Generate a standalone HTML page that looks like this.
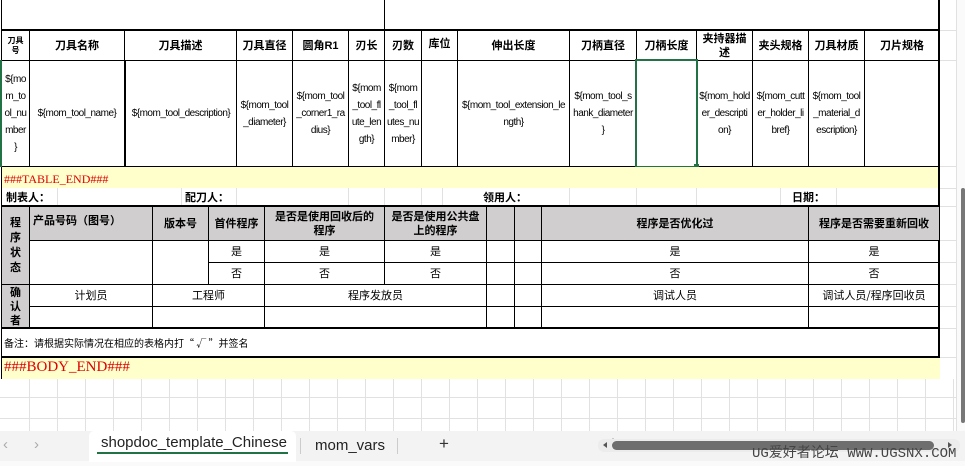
<!DOCTYPE html>
<html><head><meta charset="utf-8">
<style>
*{margin:0;padding:0;box-sizing:border-box}
body{width:965px;height:466px;overflow:hidden;background:#fff;position:relative;font-family:"Liberation Sans","Noto Sans CJK SC",sans-serif;}
.a{position:absolute}
.c{position:absolute;border:1px solid #000;display:flex;align-items:center;justify-content:center;text-align:center;font-size:10px;color:#000;line-height:17px;overflow:hidden;white-space:nowrap;padding:0}
.d{font-size:10px;letter-spacing:-0.5px}
.h{font-weight:bold;font-size:11px;line-height:14px}
.g{background:#d0cece}
.n{font-family:"Noto Sans CJK SC",sans-serif;font-size:11px}
.vl{position:absolute;width:1px;background:#e1e1e1}
.hl{position:absolute;height:1px;background:#e1e1e1}
.k{position:absolute;background:#000}
</style></head><body>
<div class="a" style="left:0;top:379px;width:956px;height:52px;background:
repeating-linear-gradient(90deg,transparent 0 27px,#e1e1e1 27px 28px);background-position:2px 0"></div>
<div class="hl" style="left:0;top:397px;width:956px"></div>
<div class="hl" style="left:0;top:418px;width:956px"></div>
<div class="vl" style="left:956px;top:0;height:431px"></div>
<div class="hl" style="left:940px;top:30px;width:17px"></div>
<div class="hl" style="left:940px;top:60px;width:17px"></div>
<div class="hl" style="left:940px;top:166px;width:17px"></div>
<div class="hl" style="left:940px;top:188px;width:17px"></div>
<div class="hl" style="left:940px;top:206px;width:17px"></div>
<div class="hl" style="left:940px;top:240px;width:17px"></div>
<div class="hl" style="left:940px;top:262px;width:17px"></div>
<div class="hl" style="left:940px;top:284px;width:17px"></div>
<div class="hl" style="left:940px;top:306px;width:17px"></div>
<div class="hl" style="left:940px;top:328px;width:17px"></div>
<div class="hl" style="left:940px;top:357px;width:17px"></div>

<div class="k" style="left:1px;top:0;width:1px;height:379px"></div>
<div class="k" style="left:384px;top:0;width:1px;height:30px"></div>
<div class="k" style="left:938px;top:0;width:2px;height:359px"></div>
<div class="k" style="left:1px;top:29px;width:939px;height:2px"></div>

<div class="c h" style="left:1px;top:30px;width:29px;height:31px;font-size:8px;line-height:10px">刀具<br>号</div>
<div class="c h" style="left:29px;top:30px;width:96px;height:31px">刀具名称</div>
<div class="c h" style="left:124px;top:30px;width:113px;height:31px">刀具描述</div>
<div class="c h" style="left:236px;top:30px;width:57px;height:31px">刀具直径</div>
<div class="c h" style="left:292px;top:30px;width:57px;height:31px">圆角R1</div>
<div class="c h" style="left:348px;top:30px;width:37px;height:31px">刃长</div>
<div class="c h" style="left:384px;top:30px;width:38px;height:31px">刃数</div>
<div class="c h" style="left:421px;top:30px;width:37px;height:31px;align-items:flex-start;padding-top:6px">库位</div>
<div class="c h" style="left:457px;top:30px;width:113px;height:31px">伸出长度</div>
<div class="c h" style="left:569px;top:30px;width:68px;height:31px">刀柄直径</div>
<div class="c h" style="left:636px;top:30px;width:61px;height:31px">刀柄长度</div>
<div class="c h" style="left:696px;top:30px;width:57px;height:31px">夹持器描<br>述</div>
<div class="c h" style="left:752px;top:30px;width:57px;height:31px">夹头规格</div>
<div class="c h" style="left:808px;top:30px;width:57px;height:31px">刀具材质</div>
<div class="c h" style="left:864px;top:30px;width:76px;height:31px">刀片规格</div>

<div class="c d" style="left:1px;top:60px;width:29px;height:107px">${mo<br>m_to<br>ol_nu<br>mber<br>}</div>
<div class="c d" style="left:29px;top:60px;width:96px;height:107px">${mom_tool_name}</div>
<div class="c d" style="left:124px;top:60px;width:113px;height:107px;border-left-width:2px">${mom_tool_description}</div>
<div class="c d" style="left:236px;top:60px;width:57px;height:107px">${mom_tool<br>_diameter}</div>
<div class="c d" style="left:292px;top:60px;width:57px;height:107px">${mom_tool<br>_corner1_ra<br>dius}</div>
<div class="c d" style="left:348px;top:60px;width:37px;height:107px">${mom<br>_tool_fl<br>ute_len<br>gth}</div>
<div class="c d" style="left:384px;top:60px;width:38px;height:107px">${mom<br>_tool_fl<br>utes_nu<br>mber}</div>
<div class="c" style="left:421px;top:60px;width:37px;height:107px"></div>
<div class="c d" style="left:457px;top:60px;width:113px;height:107px">${mom_tool_extension_le<br>ngth}</div>
<div class="c d" style="left:569px;top:60px;width:68px;height:107px">${mom_tool_s<br>hank_diameter<br>}</div>
<div class="c" style="left:636px;top:60px;width:61px;height:107px"></div>
<div class="c d" style="left:696px;top:60px;width:57px;height:107px">${mom_hold<br>er_descripti<br>on}</div>
<div class="c d" style="left:752px;top:60px;width:57px;height:107px">${mom_cutt<br>er_holder_li<br>bref}</div>
<div class="c d" style="left:808px;top:60px;width:57px;height:107px">${mom_tool<br>_material_d<br>escription}</div>
<div class="c" style="left:864px;top:60px;width:76px;height:107px"></div>
<div class="a" style="left:635px;top:59px;width:63px;height:109px;border:2px solid #217346"></div>
<div class="a" style="left:694px;top:164px;width:5px;height:5px;background:#217346"></div>
<div class="a" style="left:0;top:60px;width:2px;height:107px;background:#217346"></div>

<div class="a" style="left:2px;top:167px;width:936px;height:21px;background:#ffffcc"></div>
<div class="a" style="left:4px;top:172px;font-family:'Liberation Serif',serif;font-size:12px;color:#e00000">###TABLE_END###</div>

<div class="vl" style="left:57px;top:188px;height:18px"></div>
<div class="vl" style="left:181px;top:188px;height:18px"></div>
<div class="vl" style="left:236px;top:188px;height:18px"></div>
<div class="vl" style="left:348px;top:188px;height:18px"></div>
<div class="vl" style="left:384px;top:188px;height:18px"></div>
<div class="vl" style="left:421px;top:188px;height:18px"></div>
<div class="vl" style="left:442px;top:188px;height:18px"></div>
<div class="vl" style="left:569px;top:188px;height:18px"></div>
<div class="vl" style="left:636px;top:188px;height:18px"></div>
<div class="vl" style="left:696px;top:188px;height:18px"></div>
<div class="vl" style="left:780px;top:188px;height:18px"></div>
<div class="vl" style="left:836px;top:188px;height:18px"></div>
<div class="a n" style="left:6px;top:190px;font-weight:bold;font-size:11px;line-height:14px">制表人：</div>
<div class="a n" style="left:185px;top:190px;font-weight:bold;font-size:11px;line-height:14px">配刀人：</div>
<div class="a n" style="left:483px;top:190px;font-weight:bold;font-size:11px;line-height:14px">领用人：</div>
<div class="a n" style="left:792px;top:190px;font-weight:bold;font-size:11px;line-height:14px">日期：</div>
<div class="k" style="left:1px;top:205px;width:939px;height:2px"></div>

<div class="c h g" style="left:1px;top:206px;width:29px;height:79px;line-height:15px">程<br>序<br>状<br>态</div>
<div class="c h g" style="left:29px;top:206px;width:124px;height:35px;justify-content:flex-start;align-items:flex-start;padding:7px 0 0 3px">产品号码（图号）</div>
<div class="c h g" style="left:152px;top:206px;width:57px;height:35px">版本号</div>
<div class="c h g" style="left:208px;top:206px;width:57px;height:35px">首件程序</div>
<div class="c h g" style="left:264px;top:206px;width:121px;height:35px">是否是使用回收后的<br>程序</div>
<div class="c h g" style="left:384px;top:206px;width:103px;height:35px">是否是使用公共盘<br>上的程序</div>
<div class="c h g" style="left:486px;top:206px;width:29px;height:35px"></div>
<div class="c h g" style="left:514px;top:206px;width:28px;height:35px"></div>
<div class="c h g" style="left:541px;top:206px;width:268px;height:35px">程序是否优化过</div>
<div class="c h g" style="left:808px;top:206px;width:132px;height:35px">程序是否需要重新回收</div>

<div class="c" style="left:29px;top:240px;width:124px;height:45px"></div>
<div class="c" style="left:152px;top:240px;width:57px;height:45px"></div>
<div class="c n" style="left:208px;top:240px;width:57px;height:23px">是</div>
<div class="c n" style="left:264px;top:240px;width:121px;height:23px">是</div>
<div class="c n" style="left:384px;top:240px;width:103px;height:23px">是</div>
<div class="c" style="left:486px;top:240px;width:29px;height:23px"></div>
<div class="c" style="left:514px;top:240px;width:28px;height:23px"></div>
<div class="c n" style="left:541px;top:240px;width:268px;height:23px">是</div>
<div class="c n" style="left:808px;top:240px;width:132px;height:23px">是</div>
<div class="c n" style="left:208px;top:262px;width:57px;height:23px">否</div>
<div class="c n" style="left:264px;top:262px;width:121px;height:23px">否</div>
<div class="c n" style="left:384px;top:262px;width:103px;height:23px">否</div>
<div class="c" style="left:486px;top:262px;width:29px;height:23px"></div>
<div class="c" style="left:514px;top:262px;width:28px;height:23px"></div>
<div class="c n" style="left:541px;top:262px;width:268px;height:23px">否</div>
<div class="c n" style="left:808px;top:262px;width:132px;height:23px">否</div>

<div class="c h g" style="left:1px;top:284px;width:29px;height:45px;line-height:14px">确<br>认<br>者</div>
<div class="c n" style="left:29px;top:284px;width:124px;height:23px">计划员</div>
<div class="c n" style="left:152px;top:284px;width:113px;height:23px">工程师</div>
<div class="c n" style="left:264px;top:284px;width:223px;height:23px">程序发放员</div>
<div class="c" style="left:486px;top:284px;width:29px;height:23px"></div>
<div class="c" style="left:514px;top:284px;width:28px;height:23px"></div>
<div class="c n" style="left:541px;top:284px;width:268px;height:23px">调试人员</div>
<div class="c n" style="left:808px;top:284px;width:132px;height:23px">调试人员/程序回收员</div>
<div class="c" style="left:29px;top:306px;width:124px;height:23px"></div>
<div class="c" style="left:152px;top:306px;width:113px;height:23px"></div>
<div class="c" style="left:264px;top:306px;width:223px;height:23px"></div>
<div class="c" style="left:486px;top:306px;width:29px;height:23px"></div>
<div class="c" style="left:514px;top:306px;width:28px;height:23px"></div>
<div class="c" style="left:541px;top:306px;width:268px;height:23px"></div>
<div class="c" style="left:808px;top:306px;width:132px;height:23px"></div>
<div class="k" style="left:1px;top:327px;width:939px;height:2px"></div>

<div class="a n" style="left:4px;top:336px;font-size:10px;line-height:14px">备注：请根据实际情况在相应的表格内打“ √ ”并签名</div>
<div class="k" style="left:1px;top:356px;width:939px;height:2px"></div>
<div class="a" style="left:2px;top:358px;width:938px;height:21px;background:#ffffcc"></div>
<div class="a" style="left:4px;top:359px;font-family:'Liberation Serif',serif;font-size:15px;color:#e00000">###BODY_END###</div>

<div class="a" style="left:957px;top:0;width:8px;height:431px;background:#fafafa"></div>
<div class="a" style="left:961px;top:188px;width:4px;height:235px;background:#777;border-radius:2px"></div>

<div class="a" style="left:0;top:431px;width:965px;height:35px;background:#f3f3f3"></div>
<div class="a" style="left:0;top:461px;width:965px;height:5px;background:#fafafa"></div>
<div class="a" style="left:89px;top:431px;width:207px;height:31px;background:#fff;border-radius:5px 5px 0 0"></div>
<div class="a" style="left:97px;top:452px;width:191px;height:2px;background:#217346"></div>
<div class="a" style="left:3px;top:436px;font-size:15px;color:#aaa">‹</div>
<div class="a" style="left:34px;top:436px;font-size:15px;color:#aaa">›</div>
<div class="a" style="left:101px;top:434px;font-size:15px;color:#222">shopdoc_template_Chinese</div>
<div class="a" style="left:300px;top:438px;width:1px;height:16px;background:#ccc"></div>
<div class="a" style="left:315px;top:437px;font-size:15px;color:#222">mom_vars</div>
<div class="a" style="left:397px;top:438px;width:1px;height:16px;background:#ccc"></div>
<div class="a" style="left:439px;top:434px;font-size:17px;color:#333">+</div>
<div class="a" style="left:606px;top:436px;font-size:14px;color:#555;font-weight:bold">⋮</div>
<div class="a" style="left:598px;top:439px;width:362px;height:13px;background:#ececec;border-radius:6px"></div>
<div class="a" style="left:603px;top:442px;width:0;height:0;border:3px solid transparent;border-right:4px solid #555;border-left:0"></div>
<div class="a" style="left:612px;top:441px;width:322px;height:9px;background:#6e6e6e;border-radius:5px"></div>
<div class="a" style="left:948px;top:442px;width:0;height:0;border:3px solid transparent;border-left:4px solid #555;border-right:0"></div>
<div class="a" style="left:752px;top:446px;font-family:'Liberation Mono','Noto Sans CJK SC',monospace;font-size:14px;line-height:16px;color:#444;white-space:nowrap">UG爱好者论坛 WWW.UGSNX.COM</div>
</body></html>
